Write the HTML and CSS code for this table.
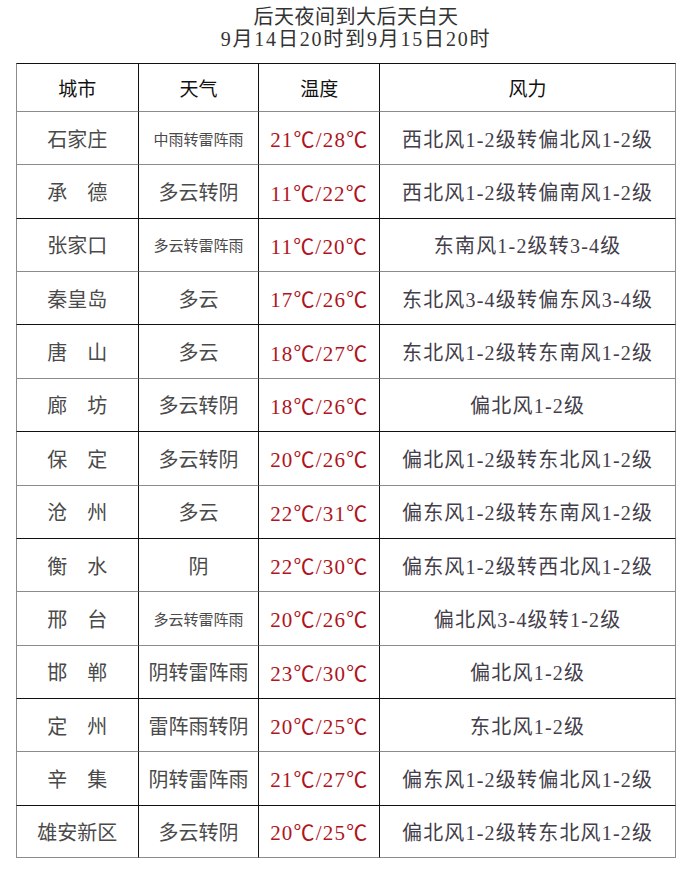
FILE: index.html
```html
<!DOCTYPE html>
<html lang="zh-CN">
<head>
<meta charset="utf-8">
<title>后天夜间到大后天白天</title>
<link rel="stylesheet" href="styles.css">
</head>
<body>
<div class="title">
  <div class="line1">后天夜间到大后天白天</div>
  <div class="line2">9月14日20时到9月15日20时</div>
</div>
<div class="table">
  <div class="cell head first">城市</div><div class="cell head">天气</div><div class="cell head">温度</div><div class="cell head last">风力</div>

  <div class="cell city first">石家庄</div><div class="cell wx small">中雨转雷阵雨</div><div class="cell temp">21℃/28℃</div><div class="cell wind last">西北风1-2级转偏北风1-2级</div>

  <div class="cell city first">承　德</div><div class="cell wx">多云转阴</div><div class="cell temp">11℃/22℃</div><div class="cell wind last">西北风1-2级转偏南风1-2级</div>

  <div class="cell city first dk">张家口</div><div class="cell wx small dk">多云转雷阵雨</div><div class="cell temp dk">11℃/20℃</div><div class="cell wind last dk">东南风1-2级转3-4级</div>

  <div class="cell city first">秦皇岛</div><div class="cell wx">多云</div><div class="cell temp">17℃/26℃</div><div class="cell wind last">东北风3-4级转偏东风3-4级</div>

  <div class="cell city first dk">唐　山</div><div class="cell wx dk">多云</div><div class="cell temp dk">18℃/27℃</div><div class="cell wind last dk">东北风1-2级转东南风1-2级</div>

  <div class="cell city first">廊　坊</div><div class="cell wx">多云转阴</div><div class="cell temp">18℃/26℃</div><div class="cell wind last">偏北风1-2级</div>

  <div class="cell city first dk">保　定</div><div class="cell wx dk">多云转阴</div><div class="cell temp dk">20℃/26℃</div><div class="cell wind last dk">偏北风1-2级转东北风1-2级</div>

  <div class="cell city first">沧　州</div><div class="cell wx">多云</div><div class="cell temp">22℃/31℃</div><div class="cell wind last">偏东风1-2级转东南风1-2级</div>

  <div class="cell city first dk">衡　水</div><div class="cell wx dk">阴</div><div class="cell temp dk">22℃/30℃</div><div class="cell wind last dk">偏东风1-2级转西北风1-2级</div>

  <div class="cell city first">邢　台</div><div class="cell wx small">多云转雷阵雨</div><div class="cell temp">20℃/26℃</div><div class="cell wind last">偏北风3-4级转1-2级</div>

  <div class="cell city first">邯　郸</div><div class="cell wx">阴转雷阵雨</div><div class="cell temp">23℃/30℃</div><div class="cell wind last">偏北风1-2级</div>

  <div class="cell city first dk">定　州</div><div class="cell wx dk">雷阵雨转阴</div><div class="cell temp dk">20℃/25℃</div><div class="cell wind last dk">东北风1-2级</div>

  <div class="cell city first">辛　集</div><div class="cell wx">阴转雷阵雨</div><div class="cell temp">21℃/27℃</div><div class="cell wind last">偏东风1-2级转偏北风1-2级</div>

  <div class="cell city first dk bottom">雄安新区</div><div class="cell wx dk bottom">多云转阴</div><div class="cell temp dk bottom">20℃/25℃</div><div class="cell wind last dk bottom">偏北风1-2级转东北风1-2级</div>
</div>
</body>
</html>
```
FILE: styles.css
```css
html, body {
  margin: 0;
  padding: 0;
  background: #ffffff;
}

body {
  font-family: "Liberation Serif", "Noto Sans CJK SC", serif;
  color: #444;
}

.title {
  padding: 7px 0 0 22px;
  text-align: center;
  font-size: 20px;
  line-height: 21.5px;
  color: #333;
}

.line1 {
  letter-spacing: 0.5px;
}

.line2 {
  letter-spacing: 1.8px;
}

.table {
  margin: 13px 0 0 16px;
  width: 660px;
  display: grid;
  grid-template-columns: 121.7px 120.6px 121px 296.7px;
  grid-template-rows: 48px repeat(14, 53.36px);
}

.cell {
  box-sizing: border-box;
  display: flex;
  align-items: center;
  justify-content: center;
  border-top: 1px solid #8c8c8c;
  border-left: 1.5px solid #111;
  white-space: nowrap;
  font-size: 20px;
}

.cell.first {
  border-left: 1px solid #8c8c8c;
}

.cell.last {
  border-right: 1px solid #8c8c8c;
}

.cell.dk {
  border-top: 1.5px solid #111;
}

.cell.bottom {
  border-bottom: 1px solid #8c8c8c;
}

.cell.head {
  border-top: 1.5px solid #111;
  font-size: 19px;
  color: #111;
}

.city {
  color: #4a4a4a;
}

.wx {
  color: #4a4a4a;
}

.wx.small {
  font-size: 15px;
}

.temp {
  color: #b0141e;
  font-size: 21px;
  letter-spacing: 1.2px;
}

.wind {
  color: #433e4a;
  font-size: 20px;
  letter-spacing: 1.2px;
}
```
